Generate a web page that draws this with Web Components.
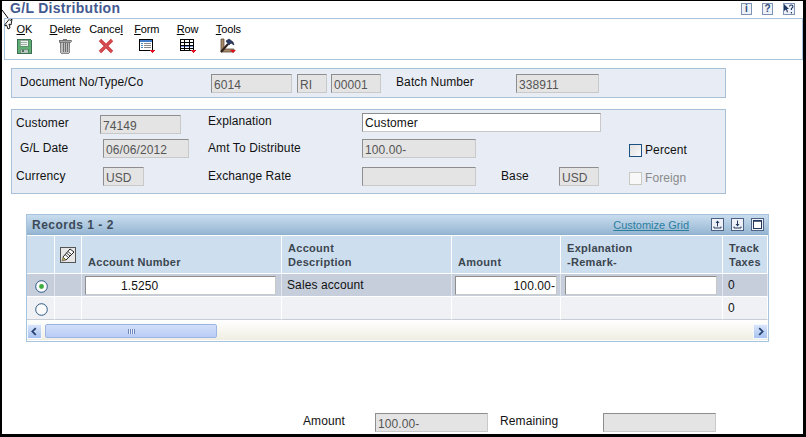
<!DOCTYPE html>
<html>
<head>
<meta charset="utf-8">
<title>G/L Distribution</title>
<style>
  html, body { margin: 0; padding: 0; background: #fff; }
  body { font-family: "Liberation Sans", Arial, sans-serif; font-size: 12px; }
</style>
</head>
<body>
<jde-window>
  <jde-titlebar slot="title" label="G/L Distribution"></jde-titlebar>
  <jde-toolbar>
    <jde-tool key="O" rest="K" icon="save"></jde-tool>
    <jde-tool key="D" rest="elete" icon="trash"></jde-tool>
    <jde-tool pre="Cance" key="l" icon="cancel"></jde-tool>
    <jde-tool key="F" rest="orm" icon="form"></jde-tool>
    <jde-tool key="R" rest="ow" icon="row"></jde-tool>
    <jde-tool key="T" rest="ools" icon="tools"></jde-tool>
  </jde-toolbar>

  <jde-panel style="height:30px;margin-top:8px">
    <jde-label style="margin:3px 0 0 8px;width:191px">Document No/Type/Co</jde-label>
    <jde-input value="6014" style="width:81px;margin-top:5px"></jde-input>
    <jde-input value="RI" style="width:30px;margin:5px 0 0 5px"></jde-input>
    <jde-input value="00001" style="width:50px;margin:5px 0 0 4px"></jde-input>
    <jde-label style="margin:3px 0 0 15px;width:120px">Batch Number</jde-label>
    <jde-input value="338911" style="width:83px;margin-top:5px"></jde-input>
  </jde-panel>

  <jde-panel style="height:85px;margin-top:11px" grid>
    <jde-label style="grid-area:1/1;margin:3px 0 0 4px">Customer</jde-label>
    <jde-input value="74149" style="grid-area:1/2;width:81px;margin-top:5px"></jde-input>
    <jde-label style="grid-area:1/3;margin-top:1px">Explanation</jde-label>
    <jde-input value="Customer" editable style="grid-area:1/4/1/8;width:239px;margin-top:3px"></jde-input>

    <jde-label style="grid-area:2/1;margin:-1px 0 0 8px">G/L Date</jde-label>
    <jde-input value="06/06/2012" style="grid-area:2/2;width:86px;margin-left:3px"></jde-input>
    <jde-label style="grid-area:2/3;margin-top:-1px">Amt To Distribute</jde-label>
    <jde-input value="100.00-" style="grid-area:2/4;width:114px"></jde-input>
    <jde-check style="grid-area:2/7;margin-top:3px">Percent</jde-check>

    <jde-label style="grid-area:3/1;margin:-1px 0 0 4px">Currency</jde-label>
    <jde-input value="USD" style="grid-area:3/2;width:41px;margin-left:3px"></jde-input>
    <jde-label style="grid-area:3/3;margin-top:-1px">Exchange Rate</jde-label>
    <jde-input style="grid-area:3/4;width:114px"></jde-input>
    <jde-label style="grid-area:3/5;margin-top:-1px">Base</jde-label>
    <jde-input value="USD" style="grid-area:3/6;width:40px"></jde-input>
    <jde-check disabled style="grid-area:3/7;margin-top:3px">Foreign</jde-check>
  </jde-panel>

  <jde-grid title-text="Records 1 - 2">
    <jde-cell kind="head"></jde-cell>
    <jde-cell kind="head"><jde-pencil></jde-pencil></jde-cell>
    <jde-cell kind="head">Account Number</jde-cell>
    <jde-cell kind="head">Account<br>Description</jde-cell>
    <jde-cell kind="head">Amount</jde-cell>
    <jde-cell kind="head">Explanation<br>-Remark-</jde-cell>
    <jde-cell kind="head">Track<br>Taxes</jde-cell>

    <jde-cell kind="on"><jde-radio checked></jde-radio></jde-cell>
    <jde-cell kind="on"></jde-cell>
    <jde-cell kind="on"><jde-input editable value="1.5250" indent="33" style="width:191px;margin-left:2px"></jde-input></jde-cell>
    <jde-cell kind="on" text>Sales account</jde-cell>
    <jde-cell kind="on"><jde-input editable right value="100.00-" style="width:102px;margin-left:2px"></jde-input></jde-cell>
    <jde-cell kind="on"><jde-input editable style="width:152px;margin-left:3px"></jde-input></jde-cell>
    <jde-cell kind="on" text>0</jde-cell>

    <jde-cell kind="off"><jde-radio></jde-radio></jde-cell>
    <jde-cell kind="off"></jde-cell>
    <jde-cell kind="off"></jde-cell>
    <jde-cell kind="off"></jde-cell>
    <jde-cell kind="off"></jde-cell>
    <jde-cell kind="off"></jde-cell>
    <jde-cell kind="off" text>0</jde-cell>
  </jde-grid>

  <jde-footer>
    <jde-label style="margin:-4px 0 0 300px;width:72px">Amount</jde-label>
    <jde-input value="100.00-" style="width:113px"></jde-input>
    <jde-label style="margin:-4px 0 0 12px;width:103px">Remaining</jde-label>
    <jde-input style="width:113px"></jde-input>
  </jde-footer>
</jde-window>

<script>
const ICONS = {
  save: `<svg width="16" height="16" viewBox="0 0 16 16" shape-rendering="crispEdges">
    <path d="M1 1h13l1 1v13H1z" fill="#5fae72" stroke="#3f6f55"/>
    <rect x="4" y="2" width="8" height="6" fill="#eef3ee" stroke="#5b7a68" stroke-width=".6"/>
    <path d="M5 4h6M5 6h6" stroke="#9fb5a6"/>
    <rect x="4" y="11" width="8" height="4" fill="#b9c6bf" stroke="#3f6f55" stroke-width=".6"/>
    <rect x="6" y="12" width="2" height="2" fill="#49705a"/>
  </svg>`,
  trash: `<svg width="16" height="16" viewBox="0 0 16 16" shape-rendering="crispEdges">
    <path d="M2 2h12v2H2z" fill="#a3a3a3" stroke="#666" stroke-width=".7"/>
    <path d="M6 1h4v1H6z" fill="#777"/>
    <path d="M3 4h10l-1 11H4z" fill="#bdbdbd" stroke="#6b6b6b" stroke-width=".8"/>
    <path d="M6 5v9M8 5v9M10 5v9" stroke="#6f6f6f"/>
  </svg>`,
  cancel: `<svg width="16" height="16" viewBox="0 0 16 16">
    <path d="M2 2l12 12M14 2L2 14" stroke="#c8343c" stroke-width="3.2" fill="none"/>
    <path d="M2 2l12 12M14 2L2 14" stroke="#d9555a" stroke-width="1.2" fill="none"/>
  </svg>`,
  form: `<svg width="18" height="16" viewBox="0 0 18 16" shape-rendering="crispEdges">
    <rect x="1.5" y="1.5" width="13" height="11" fill="#fff" stroke="#000"/>
    <rect x="2" y="2" width="12" height="2" fill="#3f79c9"/>
    <rect x="3" y="5" width="2" height="1" fill="#4a83c6"/><rect x="3" y="7" width="2" height="1" fill="#4a83c6"/><rect x="3" y="9" width="2" height="1" fill="#4a83c6"/>
    <path d="M6 5.5h7M6 7.5h7M6 9.5h7" stroke="#8a8a8a"/>
    <path d="M11 12h6l-3 3z" fill="#e0101c"/>
  </svg>`,
  row: `<svg width="18" height="16" viewBox="0 0 18 16" shape-rendering="crispEdges">
    <rect x="1" y="7" width="13" height="2" fill="#6f93dc"/>
    <path d="M1.5 1.5h13v11h-13zM1 4.5h14M1 7.5h14M1 10.5h14M5.5 1v12M10.5 1v12" fill="none" stroke="#000"/>
    <path d="M11 12h6l-3 3z" fill="#e0101c"/>
  </svg>`,
  tools: `<svg width="18" height="16" viewBox="0 0 18 16">
    <path d="M2 1h3v10h10v3H2z" fill="#a98a6a" stroke="#4d3a2a" stroke-width=".7"/>
    <path d="M2 14L9 6" stroke="#30201c" stroke-width="2"/>
    <path d="M7 3l3-2 4 3 1 3-3-2-2 2z" fill="#2b3b66" stroke="#10182e" stroke-width=".6"/>
    <path d="M11 12h6l-3 3z" fill="#e0101c"/>
  </svg>`
};

class JdeWindow extends HTMLElement {
  constructor() {
    super();
    this.attachShadow({ mode: "open" });
    this.shadowRoot.innerHTML = `
      <style>
        :host {
          display: block;
          position: relative;
          box-sizing: border-box;
          width: 806px;
          height: 437px;
          padding-left: 1px;
          overflow: hidden;
          background: #fff;
          border-style: solid;
          border-color: #000;
          border-width: 1px 3px 3px 2px;
        }
        svg { position: absolute; left: -2px; top: -1px; }
      </style>
      <slot name="title"></slot>
      <slot></slot>
      <svg width="16" height="32" viewBox="0 0 16 32">
        <path d="M2 10l6 8" stroke="#000" fill="none"/>
        <path d="M5 24.5l4-5 1 1 2-1.500-1 6 -2-1 1 4-2 1-1.500-4-1.500 1z" fill="#fff" stroke="#000" stroke-width=".9"/>
      </svg>`;
  }
}

class JdeTitlebar extends HTMLElement {
  constructor() {
    super();
    this.attachShadow({ mode: "open" });
    this.shadowRoot.innerHTML = `
      <style>
        :host { display: flex; align-items: flex-start; height: 17px; }
        h1 {
          flex: 1;
          margin: 0 0 0 7px;
          font: bold 14px/14px "Liberation Sans", Arial, sans-serif;
          letter-spacing: .3px;
          color: #44598f;
        }
        .help { display: flex; gap: 10px; margin: 2px 8px 0 0; }
        .help span, .help svg {
          box-sizing: border-box;
          display: block;
          width: 11px;
          height: 12px;
          border: 1px solid #7f93b5;
          background: #eef2f8;
          color: #2c4a78;
          font: bold 10px/10px "Liberation Sans", Arial, sans-serif;
          text-align: center;
        }
        .help svg { width: 12px; }
      </style>
      <h1></h1>
      <div class="help">
        <span>i</span><span>?</span>
        <svg viewBox="0 0 10 10"><path d="M0 0v7l2-1.500 1 3 1-.5-1-3h2z" fill="#1d3560"/><path d="M5.500 2.500q0-1.500 1.700-1.500t1.800 1.500q0 1-1.600 2v1.500M7.400 8v1.500" fill="none" stroke="#1d3560" stroke-width="1.100"/></svg>
      </div>`;
    this.shadowRoot.querySelector("h1").textContent = this.getAttribute("label") || "";
  }
}

class JdeToolbar extends HTMLElement {
  constructor() {
    super();
    this.attachShadow({ mode: "open" });
    this.shadowRoot.innerHTML = `
      <style>
        :host {
          display: flex;
          box-sizing: border-box;
          height: 42px;
          margin-left: 1px;
          border: 1px solid #a9c4dc;
        }
        ::slotted(:first-child) { margin-left: -1px; }
      </style>
      <slot></slot>`;
  }
}

class JdeTool extends HTMLElement {
  connectedCallback() {
    if (this.shadowRoot) return;
    this.attachShadow({ mode: "open" });
    const pre = this.getAttribute("pre") || "";
    const key = this.getAttribute("key") || "";
    const rest = this.getAttribute("rest") || "";
    this.shadowRoot.innerHTML = `
      <style>
        :host {
          display: flex;
          flex-direction: column;
          align-items: center;
          width: 40.8px;
          padding-top: 3px;
          color: #000;
        }
        span { font-size: 11px; letter-spacing: -.1px; line-height: 14px; white-space: nowrap; }
        u { text-underline-offset: 1px; }
        svg { display: block; margin-top: 2px; }
      </style>
      <span>${pre}<u>${key}</u>${rest}</span>
      ${ICONS[this.getAttribute("icon")] || ""}`;
  }
}

class JdePanel extends HTMLElement {
  constructor() {
    super();
    this.attachShadow({ mode: "open" });
    this.shadowRoot.innerHTML = `
      <style>
        :host {
          display: flex;
          align-items: flex-start;
          box-sizing: border-box;
          width: 715px;
          margin-left: 8px;
          background: #e8edf5;
          border: 1px solid #a8c0d8;
        }
        :host([grid]) {
          display: grid;
          padding-top: 0;
          grid-template-columns: 88px 108px 154px 139px 58px 70px 1fr;
          grid-template-rows: 29px 28px 1fr;
          align-items: start;
        }
      </style>
      <slot></slot>`;
  }
}

class JdeLabel extends HTMLElement {
  constructor() {
    super();
    this.attachShadow({ mode: "open" });
    this.shadowRoot.innerHTML = `
      <style>
        :host {
          display: block;
          line-height: 20px;
          letter-spacing: .1px;
          color: #111;
          white-space: nowrap;
        }
      </style>
      <slot></slot>`;
  }
}

class JdeInput extends HTMLElement {
  connectedCallback() {
    if (this.shadowRoot) return;
    this.attachShadow({ mode: "open" });
    const indent = this.getAttribute("indent") || "0";
    this.shadowRoot.innerHTML = `
      <style>
        :host {
          display: block;
          box-sizing: border-box;
          height: 19px;
          flex: none;
          padding: 1px 0 0 ${2 + Number(indent)}px;
          background: #e4e4e4;
          border-style: solid;
          border-width: 1px;
          border-color: #8e8e8e #c9c9c9 #c9c9c9 #8e8e8e;
          color: #555;
          line-height: 18px;
          letter-spacing: .1px;
          white-space: nowrap;
          overflow: hidden;
        }
        :host([editable]) { background: #fff; color: #111; padding-top: 0; }
        :host([right]) { text-align: right; padding-right: 1px; }
      </style>
      <span></span>`;
    this.shadowRoot.querySelector("span").textContent = this.getAttribute("value") || "";
  }
}

class JdeCheck extends HTMLElement {
  constructor() {
    super();
    this.attachShadow({ mode: "open" });
    this.shadowRoot.innerHTML = `
      <style>
        :host {
          display: flex;
          align-items: center;
          gap: 3px;
          height: 16px;
          letter-spacing: .1px;
          color: #111;
        }
        i {
          box-sizing: border-box;
          width: 13px;
          height: 13px;
          border: 1px solid #1c5080;
          background: linear-gradient(135deg, #e0e0e0, #fafafa);
        }
        :host([disabled]) { color: #8a8a8a; }
        :host([disabled]) i { border-color: #c8c8c0; background: #f8f8f8; }
      </style>
      <i></i><slot></slot>`;
  }
}

class JdeGrid extends HTMLElement {
  constructor() {
    super();
    this.attachShadow({ mode: "open" });
    this.shadowRoot.innerHTML = `
      <style>
        :host {
          display: block;
          box-sizing: border-box;
          width: 743px;
          height: 128px;
          margin: 20px 0 0 23px;
          border: 1px solid #a6c4de;
          background: #fff;
        }
        .bar {
          display: flex;
          align-items: center;
          height: 20px;
          padding: 0 4px 0 5px;
          background: linear-gradient(#c9ddee, #96b6d3);
          border-bottom: 1px solid #8fb0cd;
          box-sizing: border-box;
        }
        .bar b { flex: 1; font-size: 12px; letter-spacing: .5px; color: #3c4a58; }
        .bar a {
          margin-right: 15px;
          font-size: 11px;
          color: #2a7f9f;
          text-decoration: underline;
        }
        .btn {
          display: block;
          width: 13px;
          height: 13px;
          margin-left: 7px;
        }
        .rows {
          display: grid;
          margin-top: 1px;
          grid-template-columns: 28px 27px 200px 170px 109px 162px 45px;
          grid-template-rows: 38px 23px 23px;
        }
        .scroll {
          display: flex;
          align-items: flex-start;
          height: 20px;
          background: linear-gradient(#fff, #f0eee2);
          box-sizing: border-box;
          padding-top: 4px;
        }
        .arrow {
          display: block;
          width: 15px;
          height: 15px;
          background: linear-gradient(#d8e4fa, #a9c2f0);
          border: 1px solid #f4f8ff;
          box-sizing: border-box;
        }
        .thumb {
          box-sizing: border-box;
          display: flex;
          align-items: center;
          justify-content: center;
          width: 172px;
          height: 14px;
          margin: 0 auto 0 3px;
          background: linear-gradient(#d2dff9, #b8ccf5);
          border: 1px solid #9db5e4;
          border-radius: 2px;
        }
        .thumb i {
          width: 7px;
          height: 5px;
          background: repeating-linear-gradient(90deg, #6f87b8 0 1px, #e8effd 1px 2px);
        }
      </style>
      <div class="bar">
        <b></b>
        <a>Customize Grid</a>
        <svg class="btn" viewBox="0 0 13 13"><rect x=".5" y=".5" width="12" height="12" fill="#eef2f8" stroke="#4d6283"/><path d="M6.500 2.500L4.500 5h4z" fill="#22395f"/><path d="M6.500 4.500v4M3 8.500v1.500h7V8.500" fill="none" stroke="#22395f"/></svg>
        <svg class="btn" viewBox="0 0 13 13"><rect x=".5" y=".5" width="12" height="12" fill="#eef2f8" stroke="#4d6283"/><path d="M6.500 8.500L4.500 6h4z" fill="#22395f"/><path d="M6.500 2.500v4M3 8.500v1.500h7V8.500" fill="none" stroke="#22395f"/></svg>
        <svg class="btn" viewBox="0 0 13 13"><rect x=".5" y=".5" width="12" height="12" fill="#eef2f8" stroke="#4d6283"/><rect x="2.500" y="2.500" width="8" height="8" fill="#fff" stroke="#22395f"/><path d="M2 3h9" stroke="#22395f" stroke-width="1.500"/></svg>
      </div>
      <div class="rows"><slot></slot></div>
      <div class="scroll">
        <svg class="arrow" viewBox="0 0 15 15"><path d="M9 3.500L5 7.500l4 4" fill="none" stroke="#24406e" stroke-width="2"/></svg>
        <span class="thumb"><i></i></span>
        <svg class="arrow" viewBox="0 0 15 15"><path d="M6 3.500l4 4-4 4" fill="none" stroke="#24406e" stroke-width="2"/></svg>
      </div>`;
    this.shadowRoot.querySelector("b").textContent = this.getAttribute("title-text") || "";
  }
}

class JdeCell extends HTMLElement {
  constructor() {
    super();
    this.attachShadow({ mode: "open" });
    this.shadowRoot.innerHTML = `
      <style>
        :host {
          display: flex;
          align-items: center;
          box-sizing: border-box;
          border-right: 1px solid #fff;
          border-bottom: 1px solid #fff;
          padding-left: 1px;
          letter-spacing: .1px;
          color: #111;
          white-space: nowrap;
          overflow: hidden;
        }
        :host([text]) { padding-left: 5px; }
        :host([kind="head"]) {
          align-items: flex-end;
          padding: 0 0 4px 6px;
          background: #cddfef;
          color: #3c4650;
          font-size: 11px;
          font-weight: bold;
          letter-spacing: .3px;
          line-height: 14px;
        }
        :host([kind="on"]) { background: #c6cedc; border-right-color: #e4e7ee; }
        :host([kind="off"]) { background: #f0f1f4; border-bottom-color: #c8ccd4; }
        div { width: 100%; }
      </style>
      <div><slot></slot></div>`;
  }
}

class JdeRadio extends HTMLElement {
  constructor() {
    super();
    this.attachShadow({ mode: "open" });
    this.shadowRoot.innerHTML = `
      <style>
        :host { display: block; width: 13px; height: 13px; margin: 2px 0 0 7px; }
        svg { display: block; }
        circle.dot { display: none; }
        :host([checked]) circle.dot { display: block; }
      </style>
      <svg width="13" height="13" viewBox="0 0 13 13">
        <circle cx="6.500" cy="6.500" r="5.800" fill="#fbfbfb" stroke="#2c5a85"/>
        <circle class="dot" cx="6.500" cy="6.500" r="2.400" fill="#3cad3c"/>
      </svg>`;
  }
}

class JdePencil extends HTMLElement {
  constructor() {
    super();
    this.attachShadow({ mode: "open" });
    this.shadowRoot.innerHTML = `
      <style>
        :host { display: block; width: 16px; height: 16px; margin: 0 0 6px -1px; }
        svg { display: block; }
      </style>
      <svg width="16" height="16" viewBox="0 0 16 16">
        <rect x=".5" y=".5" width="15" height="15" fill="#e6e6e6" stroke="#555"/>
        <path d="M3 10L10 2l4 3-8 8z" fill="#fff" stroke="#222"/>
        <path d="M5 7.500l3.500 3M6.500 6l3.500 3M8 4.500l3.500 3" stroke="#222" stroke-width=".9"/>
        <path d="M3 10l-1 4 4-1" fill="#b9a650" stroke="#555" stroke-width=".6"/>
      </svg>`;
  }
}

class JdeFooter extends HTMLElement {
  constructor() {
    super();
    this.attachShadow({ mode: "open" });
    this.shadowRoot.innerHTML = `
      <style>
        :host { display: flex; align-items: center; height: 19px; margin-top: 71px; }
      </style>
      <slot></slot>`;
  }
}

customElements.define("jde-window", JdeWindow);
customElements.define("jde-titlebar", JdeTitlebar);
customElements.define("jde-toolbar", JdeToolbar);
customElements.define("jde-tool", JdeTool);
customElements.define("jde-panel", JdePanel);
customElements.define("jde-label", JdeLabel);
customElements.define("jde-input", JdeInput);
customElements.define("jde-check", JdeCheck);
customElements.define("jde-grid", JdeGrid);
customElements.define("jde-cell", JdeCell);
customElements.define("jde-radio", JdeRadio);
customElements.define("jde-pencil", JdePencil);
customElements.define("jde-footer", JdeFooter);
</script>
</body>
</html>
